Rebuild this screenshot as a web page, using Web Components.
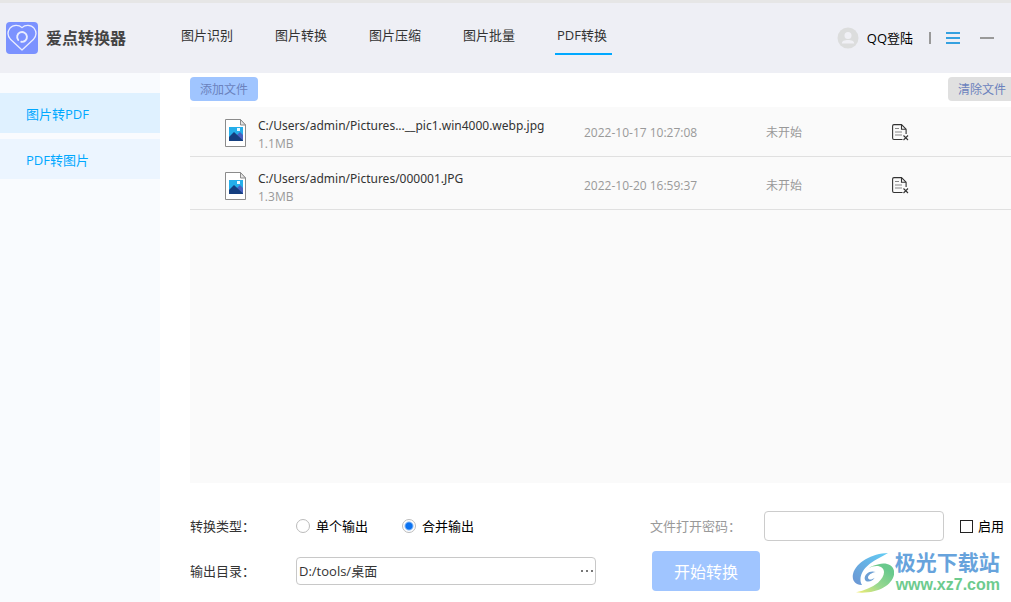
<!DOCTYPE html>
<html lang="zh-CN">
<head>
<meta charset="utf-8">
<meta name="viewport" content="width=device-width, initial-scale=1">
<title>爱点转换器</title>
<style>
html, body { margin: 0; height: 100%; }
body { font: 13px/18px "Open Sans", "Noto Sans CJK SC", sans-serif; color: #333; background: #fff; overflow: hidden; }
</style>
</head>
<body>
<converter-app></converter-app>
<script>
const define = (name, html, setup) => {
  const template = document.createElement('template');
  template.innerHTML = html;
  customElements.define(name, class extends HTMLElement {
    constructor() {
      super();
      this.attachShadow({ mode: 'open' }).append(template.content.cloneNode(true));
    }
    connectedCallback() { if (setup) setup(this, this.shadowRoot); }
  });
};

define('app-logo', `
<style>
:host { display: flex; align-items: center; gap: 8px; font-size: 16px; line-height: 24px; font-weight: 700; color: #444; white-space: nowrap; }
svg { display: block; }
</style>
<svg width="32" height="32" viewBox="0 0 32 32" fill="none" stroke="#e9edff" stroke-linecap="round" stroke-linejoin="round" aria-hidden="true">
  <rect width="32" height="32" rx="4" fill="#7b92ff" stroke="none"/>
  <path d="M16 5.600C13 2.600 7 2.400 4 6.200c-3 4-2 8.400 .7 11.400L16 28l11.300-10.400c2.700-3 3.700-7.400 .7-11.400C25 2.400 19 2.600 16 5.600Z" stroke-width="1.300"/>
  <path d="M12.200 18a4.900 4.900 0 1 1 3.100 1.800" stroke-width="1.900"/>
</svg>
<slot></slot>`);

define('nav-tab', `
<style>
:host { display: block; }
a { display: block; height: 36px; min-width: 53px; padding: 0 2px; line-height: 37px; border-bottom: 2px solid transparent; color: #333; text-decoration: none; white-space: nowrap; }
:host([active]) a { border-color: #00a8ff; }
</style>
<a href="#"><slot></slot></a>`);

define('user-tools', `
<style>
:host { display: flex; align-items: center; color: #000; }
button { border: 0; padding: 0; background: none; font: inherit; color: inherit; display: flex; align-items: center; }
.login { gap: 8px; }
.bar { width: 2px; height: 12px; background: #999; margin: 0 15px 0 16px; }
.min { margin-left: 20px; }
svg { display: block; }
</style>
<button class="login" type="button">
  <svg width="22" height="22" viewBox="0 0 22 22" aria-hidden="true"><circle cx="11" cy="11" r="10.500" fill="#dcdddd"/><circle cx="11" cy="8.500" r="3.500" fill="#f0f0f5"/><path d="M4.800 16.500c0-2.600 2.700-3.600 6.200-3.600s6.200 1 6.200 3.600Z" fill="#f0f0f5"/></svg>
  <span>QQ登陆</span>
</button>
<span class="bar"></span>
<button type="button" aria-label="菜单"><svg width="14" height="14" viewBox="0 0 14 14" fill="#35a1e0"><path d="M0 1h14v2H0zM0 6h14v2H0zM0 11h14v2H0z"/></svg></button>
<button class="min" type="button" aria-label="最小化"><svg width="14" height="14" viewBox="0 0 14 14" fill="#999"><path d="M0 6h14v2H0z"/></svg></button>`);

define('app-header', `
<style>
:host { display: flex; align-items: center; height: 70px; flex: none; border-top: 3px solid #e6e6e6; background: #eeeff5; padding: 0 17px 0 6px; }
app-logo { width: 173px; flex: none; }
nav { display: flex; gap: 37px; align-self: flex-start; padding-top: 14px; }
user-tools { margin-left: auto; }
</style>
<app-logo>爱点转换器</app-logo>
<nav>
  <nav-tab>图片识别</nav-tab><nav-tab>图片转换</nav-tab><nav-tab>图片压缩</nav-tab><nav-tab>图片批量</nav-tab><nav-tab active>PDF转换</nav-tab>
</nav>
<user-tools></user-tools>`);

define('side-item', `
<style>
:host { display: block; }
a { display: block; height: 40px; padding: 0 26px; line-height: 42px; background: #ecf5ff; color: #00a8ff; text-decoration: none; }
:host([active]) a { background: #dff1ff; }
</style>
<a href="#"><slot></slot></a>`);

define('side-menu', `
<style>
:host { display: flex; flex-direction: column; gap: 6px; width: 160px; flex: none; padding-top: 20px; box-sizing: border-box; background: #f9fbfe; }
</style>
<side-item active>图片转PDF</side-item>
<side-item>PDF转图片</side-item>`);

define('action-button', `
<style>
:host { display: block; }
button { display: block; border: 0; border-radius: 4px; padding: 2px 10px 0; font: inherit; font-size: 12px; line-height: 22px; background: #a0c5ff; color: #6b82bd; white-space: nowrap; }
:host([kind=plain]) button { background: #e0e0e0; }
:host([kind=large]) button { padding: 2px 22px 0; font-size: 16px; line-height: 38px; color: #fff; }
</style>
<button type="button"><slot></slot></button>`);

define('picture-icon', `
<style>:host, svg { display: block; }</style>
<svg width="22" height="28" viewBox="0 0 22 28" aria-hidden="true">
  <path d="M.5 .5h15l5 5.500v21.500H.5Z" fill="#fff" stroke="#8b8b8b"/>
  <path d="M15.500 .5v5.500h5Z" fill="#e6e6e6" stroke="#8b8b8b"/>
  <path d="M4 8h14v14H4z" fill="#25aeea"/>
  <path d="M9 19l6-6 3 3v6H9z" fill="#4862c0"/>
  <path d="M4 18l5-5 9 8.500V22H4z" fill="#153f80"/>
  <path d="M12 9h3v3h-3z" fill="#e8f7ff"/>
</svg>`);

define('remove-button', `
<style>
:host { display: block; }
button { display: block; border: 0; padding: 0; background: none; }
svg { display: block; }
</style>
<button type="button" aria-label="移除">
<svg width="17" height="17" viewBox="0 0 17 17" fill="none" stroke="#333" stroke-width="1.100">
  <path d="M10.500 15.500H2A1.500 1.500 0 0 1 .6 14V2.100A1.500 1.500 0 0 1 2 .6h7.500l4.600 4.600v4.900M9.500 .6v4.600h4.600"/>
  <path d="M3 4.500h4M3 8h7M3 11h7" stroke="#888"/><path d="M11.500 11.500l4.500 4.500m0-4.500l-4.500 4.500"/>
</svg>
</button>`);

const files = [
  ['C:/Users/admin/Pictures...__pic1.win4000.webp.jpg', '1.1MB', '2022-10-17 10:27:08', '未开始'],
  ['C:/Users/admin/Pictures/000001.JPG', '1.3MB', '2022-10-20 16:59:37', '未开始']
];

define('file-list', `
<style>
:host { display: block; background: #fafafa; }
table { width: 100%; border-collapse: collapse; table-layout: fixed; }
.name { width: 394px; } .date { width: 182px; } .state { width: 126px; }
td { height: 47px; padding: 2px 0 0; border-bottom: 1px solid #e0e0e0; color: #999; font-size: 12px; vertical-align: middle; white-space: nowrap; }
tr + tr td { padding-top: 5px; }
.file { display: flex; align-items: center; gap: 11px; padding-left: 35px; }
.text { padding-top: 4px; }
strong { display: block; font-family: "Noto Sans", "Noto Sans CJK SC", sans-serif; font-weight: 400; color: #333; }
small { display: block; font-size: 12px; }
</style>
<table>
<colgroup><col class="name"><col class="date"><col class="state"><col></colgroup>
<tbody></tbody>
</table>`, (host, root) => {
  root.querySelector('tbody').innerHTML = files.map(([name, size, date, state]) => `
    <tr><td><div class="file"><picture-icon></picture-icon><div class="text"><strong>${name}</strong><small>${size}</small></div></div></td>
    <td>${date}</td><td>${state}</td><td><remove-button></remove-button></td></tr>`).join('');
});

define('site-mark', `
<style>
:host { display: flex; align-items: center; gap: 1px; padding-top: 4px; white-space: nowrap; }
svg { display: block; }
b { display: block; font-size: 21px; line-height: 24px; color: #67a3dc; }
a { display: block; padding-left: 1px; font: 700 16px/22px "Liberation Sans", sans-serif; color: #6dcb8e; text-decoration: none; }
</style>
<svg width="42" height="42" viewBox="33 34 126 126" aria-hidden="true">
  <defs>
    <linearGradient id="sky" x1="1" y1="0" x2="0" y2="1"><stop offset="0" stop-color="#62cdf5"/><stop offset="1" stop-color="#6c94d2"/></linearGradient>
    <linearGradient id="leaf" x1="1" y1="0" x2="0" y2="1"><stop offset=".2" stop-color="#69c98d"/><stop offset=".6" stop-color="#9bd990"/><stop offset="1" stop-color="#f3ed72"/></linearGradient>
  </defs>
  <path d="M141 37C93 38 45 65 36 100c-4 20 7 34 27 33-10-16-3-40 16-57 17-16 42-27 62-39Z" fill="url(#sky)"/>
  <path d="M84 82c12-7 30-9 39-1 12 11 5 29-12 45-18 14-40 23-66 29 60 6 107-19 114-53 5-27-23-39-46-31-12 3-22 6-29 11Z" fill="url(#leaf)"/>
  <path d="M104 94c-17-6-34 6-33 20 2 14 24 9 30-3-9 7-19 7-20 0 0-8 11-15 23-17Z" fill="#6c9fd4"/>
</svg>
<div><b>极光下载站</b><a href="#">www.xz7.com</a></div>`);

define('output-options', `
<style>
:host { display: grid; grid-template-columns: 106px 300px 1fr; grid-template-rows: 30px 40px; row-gap: 10px; align-items: center; padding: 28px 7px 11px 0; color: #333; }
.radios { display: flex; gap: 34px; }
.choice { display: flex; align-items: center; gap: 6px; color: #000; white-space: nowrap; }
input { box-sizing: border-box; margin: 0; font: inherit; color: #333; }
input[type=radio] { appearance: none; width: 14px; height: 14px; border: 1px solid #bbb; border-radius: 50%; background: #fff; }
input[type=radio]:checked { background: radial-gradient(circle, #0b72f0 3px, #fff 5px); }
input[type=checkbox] { appearance: none; width: 13px; height: 13px; border: 1px solid #222; background: #fff; }
.path { display: flex; height: 28px; box-sizing: border-box; border: 1px solid #c8c8c8; border-radius: 4px; }
.path input { flex: 1; min-width: 0; border: 0; padding: 0 2px; background: none; outline: 0; }
.path button { display: flex; align-items: center; border: 0; padding: 0 2px; background: none; }
.secret, .go { display: flex; align-items: center; margin-left: 54px; white-space: nowrap; }
.go { justify-content: space-between; padding: 0 4px 0 2px; }
.secret > label:first-child { width: 114px; color: #999; }
.secret input[type=password] { width: 180px; height: 30px; border: 1px solid #ccc; border-radius: 4px; padding: 0 4px; }
.enable { margin-left: auto; gap: 5px; }
</style>
<span id="type">转换类型：</span>
<div class="radios" role="radiogroup" aria-labelledby="type">
  <label class="choice"><input type="radio" name="mode">单个输出</label>
  <label class="choice"><input type="radio" name="mode" checked>合并输出</label>
</div>
<div class="secret">
  <label for="pw">文件打开密码：</label><input id="pw" type="password">
  <label class="choice enable"><input type="checkbox">启用</label>
</div>
<label for="dir">输出目录：</label>
<div class="path"><input id="dir" type="text" value="D:/tools/桌面"><button type="button" aria-label="浏览"><svg width="12" height="4" viewBox="0 0 12 4" fill="#777"><path d="M0 1h2v2H0zM5 1h2v2H5zM10 1h2v2h-2z"/></svg></button></div>
<div class="go"><action-button kind="large">开始转换</action-button><site-mark></site-mark></div>`);

define('converter-app', `
<style>
:host { display: flex; flex-direction: column; min-height: 100vh; }
.body { display: flex; flex: 1; }
main { flex: 1; min-width: 0; display: flex; flex-direction: column; padding-left: 30px; }
.toolbar { display: flex; justify-content: space-between; padding: 4px 0 6px; margin-right: -5px; }
file-list { flex: 1; }
</style>
<app-header></app-header>
<div class="body">
  <side-menu></side-menu>
  <main>
    <div class="toolbar"><action-button>添加文件</action-button><action-button kind="plain">清除文件</action-button></div>
    <file-list></file-list>
    <output-options></output-options>
  </main>
</div>`);
</script>
</body>
</html>
